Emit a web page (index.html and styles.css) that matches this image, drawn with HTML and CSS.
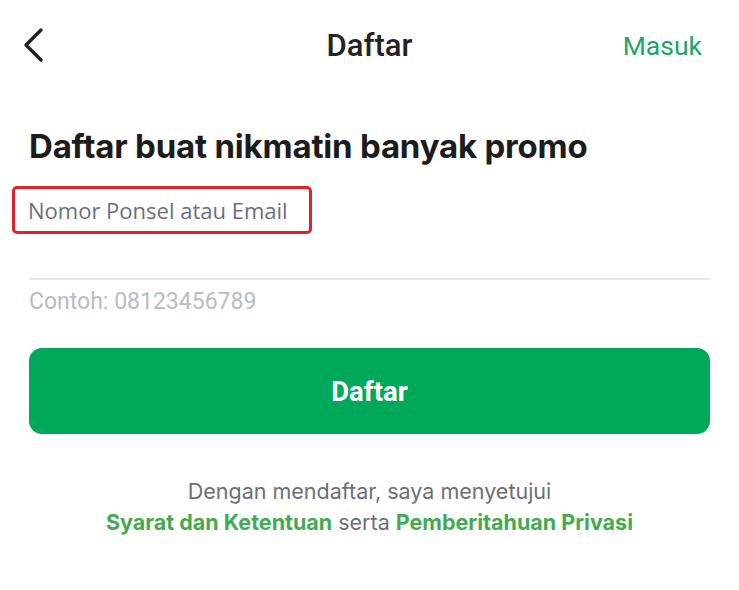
FILE: index.html
```html
<!DOCTYPE html>
<html lang="id">
<head>
<meta charset="utf-8">
<title>Daftar</title>
<link rel="stylesheet" href="styles.css">
</head>
<body>
<div class="page">
  <header class="topbar">
    <button class="back" aria-label="Kembali">
      <svg width="24" height="36" viewBox="0 0 24 36"><path d="M20 3 L5 18 L20 33" fill="none" stroke="#222" stroke-width="3.4" stroke-linecap="round" stroke-linejoin="round"/></svg>
    </button>
    <div class="title">Daftar</div>
    <a class="login" href="#">Masuk</a>
  </header>

  <h1 class="heading">Daftar buat nikmatin banyak promo</h1>

  <div class="field">
    <label class="label">Nomor Ponsel atau Email</label>
    <div class="input-line"></div>
    <div class="hint">Contoh: 08123456789</div>
  </div>

  <button class="submit">Daftar</button>

  <div class="terms">
    <div>Dengan mendaftar, saya menyetujui</div>
    <div class="terms-links"><a href="#">Syarat dan Ketentuan</a> serta <a href="#">Pemberitahuan Privasi</a></div>
  </div>
</div>
</body>
</html>
```

FILE: styles.css
```css
* { box-sizing: border-box; }
html, body { margin: 0; padding: 0; background: #fff; }
body { font-family: Roboto, "Liberation Sans", sans-serif; color: #222; }
.page { width: 739px; padding: 0 29px; }

.topbar {
  display: flex;
  align-items: center;
  justify-content: space-between;
  height: 90px;
  position: relative;
}
.back {
  border: 0; background: none; padding: 0; margin-left: -8px;
  width: 24px; height: 36px; display: flex; cursor: pointer;
}
.title {
  position: absolute; left: 0; right: 0; text-align: center;
  font-size: 31px; font-weight: 500; color: #222;
  pointer-events: none;
}
.login {
  font-size: 26.5px; color: #1fa463; text-decoration: none; margin-right: 8px;
}

.heading {
  font-family: Inter, "Noto Sans", sans-serif;
  font-size: 33px; font-weight: 700; color: #1c1c1c;
  margin: 36px 0 0; letter-spacing: -0.2px; line-height: 40px;
}

.field { margin-top: 23px; }
.label {
  display: inline-block;
  font-family: "Open Sans", sans-serif;
  font-size: 22px; line-height: 30px; color: #6b7080;
  outline: 3px solid #e0222c;
  outline-offset: 0;
  padding: 6px 21px 6px 13px;
  margin-left: -14px;
  border-radius: 2px;
}
.input-line { height: 2px; background: #e6e8ec; margin-top: 47px; }
.hint { font-size: 23px; color: #b6bcc8; margin-top: 8px; }

.submit {
  display: block; width: 100%; height: 86px; margin-top: 33px;
  border: 0; border-radius: 13px; background: #00a85a;
  color: #fff; font-family: Roboto, sans-serif; font-size: 27.5px; font-weight: 700;
}

.terms {
  margin-top: 42px; text-align: center;
  font-family: Inter, "Noto Sans", sans-serif; font-size: 21.5px; color: #6b6f7a;
  line-height: 31px;
}
.terms a { color: #43ab4f; font-weight: 700; text-decoration: none; }
```
